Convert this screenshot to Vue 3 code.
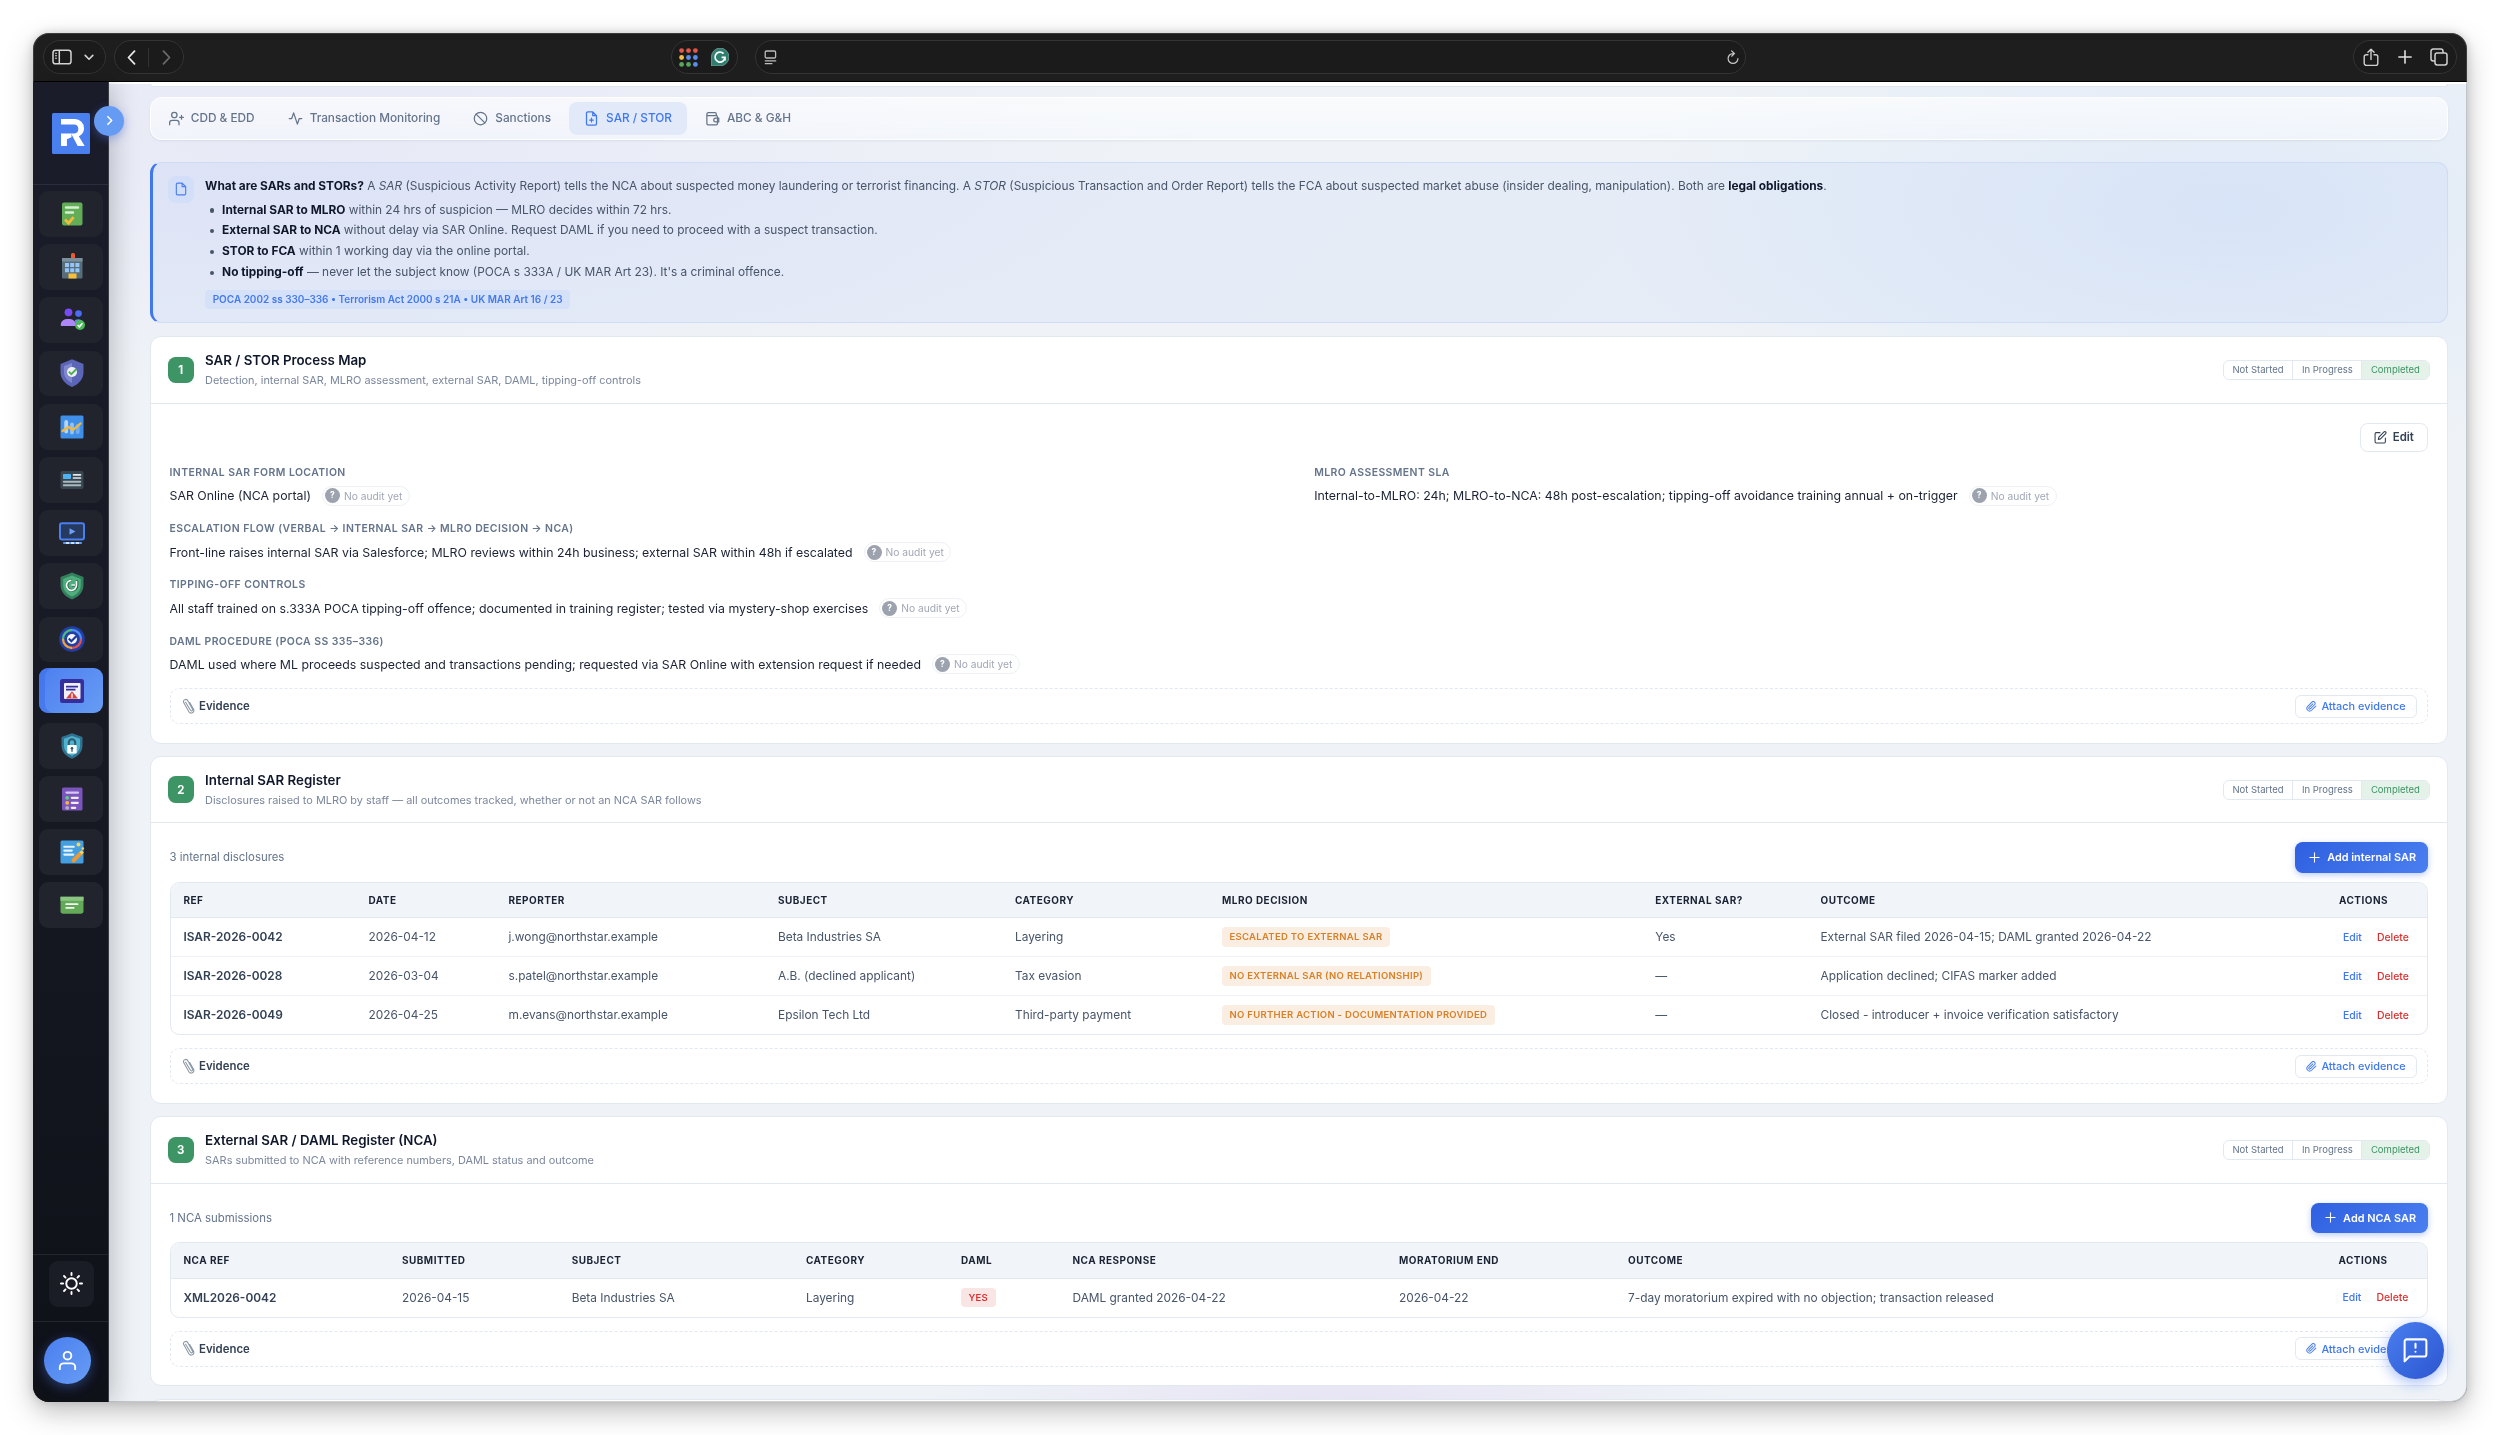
<script setup>
const tabs = [
  { label: 'CDD & EDD', icon: 'user' },
  { label: 'Transaction Monitoring', icon: 'pulse' },
  { label: 'Sanctions', icon: 'ban' },
  { label: 'SAR / STOR', icon: 'file', active: true },
  { label: 'ABC & G&H', icon: 'wallet' },
]

const nav = ['check', 'building', 'people', 'shield', 'chart', 'news', 'video', 'green', 'target', 'report', 'lock', 'list', 'write', 'card']

const rules = [
  ['Internal SAR to MLRO', ' within 24 hrs of suspicion — MLRO decides within 72 hrs.'],
  ['External SAR to NCA', ' without delay via SAR Online. Request DAML if you need to proceed with a suspect transaction.'],
  ['STOR to FCA', ' within 1 working day via the online portal.'],
  ['No tipping-off', " — never let the subject know (POCA s 333A / UK MAR Art 23). It's a criminal offence."],
]

const fields = [
  { label: 'INTERNAL SAR FORM LOCATION', value: 'SAR Online (NCA portal)' },
  { label: 'MLRO ASSESSMENT SLA', value: 'Internal-to-MLRO: 24h; MLRO-to-NCA: 48h post-escalation; tipping-off avoidance training annual + on-trigger' },
  { label: 'ESCALATION FLOW (VERBAL → INTERNAL SAR → MLRO DECISION → NCA)', value: 'Front-line raises internal SAR via Salesforce; MLRO reviews within 24h business; external SAR within 48h if escalated', wide: true },
  { label: 'TIPPING-OFF CONTROLS', value: 'All staff trained on s.333A POCA tipping-off offence; documented in training register; tested via mystery-shop exercises', wide: true },
  { label: 'DAML PROCEDURE (POCA SS 335–336)', value: 'DAML used where ML proceeds suspected and transactions pending; requested via SAR Online with extension request if needed', wide: true },
]

const sections = [
  { n: 1, title: 'SAR / STOR Process Map', sub: 'Detection, internal SAR, MLRO assessment, external SAR, DAML, tipping-off controls' },
  {
    n: 2, title: 'Internal SAR Register', sub: 'Disclosures raised to MLRO by staff — all outcomes tracked, whether or not an NCA SAR follows',
    count: '3 internal disclosures', add: 'Add internal SAR', cols: 'cols-internal',
    head: ['REF', 'DATE', 'REPORTER', 'SUBJECT', 'CATEGORY', 'MLRO DECISION', 'EXTERNAL SAR?', 'OUTCOME'],
    rows: [
      ['ISAR-2026-0042', '2026-04-12', 'j.wong@northstar.example', 'Beta Industries SA', 'Layering', { pill: 'ESCALATED TO EXTERNAL SAR', tone: 'amber' }, 'Yes', 'External SAR filed 2026-04-15; DAML granted 2026-04-22'],
      ['ISAR-2026-0028', '2026-03-04', 's.patel@northstar.example', 'A.B. (declined applicant)', 'Tax evasion', { pill: 'NO EXTERNAL SAR (NO RELATIONSHIP)', tone: 'amber' }, '—', 'Application declined; CIFAS marker added'],
      ['ISAR-2026-0049', '2026-04-25', 'm.evans@northstar.example', 'Epsilon Tech Ltd', 'Third-party payment', { pill: 'NO FURTHER ACTION - DOCUMENTATION PROVIDED', tone: 'amber' }, '—', 'Closed - introducer + invoice verification satisfactory'],
    ],
  },
  {
    n: 3, title: 'External SAR / DAML Register (NCA)', sub: 'SARs submitted to NCA with reference numbers, DAML status and outcome',
    count: '1 NCA submissions', add: 'Add NCA SAR', cols: 'cols-external',
    head: ['NCA REF', 'SUBMITTED', 'SUBJECT', 'CATEGORY', 'DAML', 'NCA RESPONSE', 'MORATORIUM END', 'OUTCOME'],
    rows: [
      ['XML2026-0042', '2026-04-15', 'Beta Industries SA', 'Layering', { pill: 'YES', tone: 'red' }, 'DAML granted 2026-04-22', '2026-04-22', '7-day moratorium expired with no objection; transaction released'],
    ],
  },
]
</script>

<template>
  <div class="window">
    <header class="chrome">
      <div class="pill p-side">
        <svg width="20" height="16" viewBox="0 0 20 16" fill="none" stroke="#d6d6d6" stroke-width="1.5"><rect x="1" y="1.2" width="18" height="13.6" rx="2.6" /><path d="M7.3 1.2v13.6" /><path d="M3 4.3h2M3 6.8h2M3 9.3h2" stroke-width="1.1" /></svg>
        <svg width="10" height="7" viewBox="0 0 10 7" fill="none" stroke="#d6d6d6" stroke-width="1.6" stroke-linecap="round" stroke-linejoin="round"><path d="M1.2 1.4 5 5.2l3.8-3.8" /></svg>
      </div>
      <div class="pill p-nav">
        <svg width="9" height="15" viewBox="0 0 9 15" fill="none" stroke="#e8e8e8" stroke-width="1.8" stroke-linecap="round" stroke-linejoin="round"><path d="M7.5 1.2 1.5 7.5l6 6.3" /></svg>
        <i class="vline"></i>
        <svg width="9" height="15" viewBox="0 0 9 15" fill="none" stroke="#6a6a6a" stroke-width="1.8" stroke-linecap="round" stroke-linejoin="round"><path d="m1.5 1.2 6 6.3-6 6.3" /></svg>
      </div>
      <div class="pill p-ext">
        <svg width="19" height="19" viewBox="0 0 19 19">
          <g fill="#e2574a"><circle cx="2.6" cy="2.6" r="2.4" /><circle cx="9.5" cy="2.6" r="2.4" /><circle cx="16.4" cy="2.6" r="2.4" /></g>
          <circle cx="2.6" cy="9.5" r="2.4" fill="#f2bd42" /><g fill="#5b8def"><circle cx="9.5" cy="9.5" r="2.4" /><circle cx="16.4" cy="9.5" r="2.4" /><circle cx="16.4" cy="16.4" r="2.4" /></g>
          <g fill="#58a55c"><circle cx="2.6" cy="16.4" r="2.4" /><circle cx="9.5" cy="16.4" r="2.4" /></g>
        </svg>
        <svg width="18" height="18" viewBox="0 0 18 18"><path d="M9 0a9 9 0 1 1 0 18H.4V9A9 9 0 0 1 9 0z" fill="#2f7f71" stroke="#9fb5b0" stroke-width=".6" /><path d="M12.6 5.6A5 5 0 1 0 14 9.4h-3.4M14 9.200v3.200" fill="none" stroke="#fff" stroke-width="1.7" /></svg>
      </div>
      <div class="pill p-url">
        <svg width="13" height="15" viewBox="0 0 13 15" fill="none" stroke="#bdbdbd" stroke-width="1.3"><rect x="1.2" y="1" width="10.4" height="7" rx="1.3" /><path d="M.8 10.800h11.400M.8 13.700h7.600" /></svg>
        <svg width="12" height="15" viewBox="0 0 12 15" fill="none" stroke="#c8c8c8" stroke-width="1.2" stroke-linecap="round"><path d="M6 3.600a4.900 4.900 0 1 0 4.900 4.900M4.600.9 7.400 3.600 4.700 6.200" /></svg>
      </div>
      <div class="pill p-act">
        <svg width="16" height="19" viewBox="0 0 16 19" fill="none" stroke="#d0d0d0" stroke-width="1.4" stroke-linecap="round" stroke-linejoin="round"><path d="M5 6.700H3.200A2 2 0 0 0 1.200 8.700v6.500a2.200 2.200 0 0 0 2.200 2.200h9.200a2.200 2.200 0 0 0 2.200-2.200V8.700a2 2 0 0 0-2-2H11M8 11.500V1.400M4.900 4.300 8 1.200l3.100 3.100" /></svg>
        <svg width="14" height="14" viewBox="0 0 14 14" stroke="#e0e0e0" stroke-width="1.6" stroke-linecap="round"><path d="M7 .9v12.200M.9 7h12.200" /></svg>
        <svg width="18" height="18" viewBox="0 0 18 18" fill="none" stroke="#d0d0d0" stroke-width="1.5" stroke-linejoin="round"><rect x="5" y="5" width="12" height="12" rx="2.2" /><path d="M5 13H3.200A2.200 2.200 0 0 1 1 10.800V3.200A2.200 2.200 0 0 1 3.200 1h7.600A2.200 2.200 0 0 1 13 3.200V5" /></svg>
      </div>
    </header>

    <div class="body">
      <aside class="sidebar">
        <div class="brand">
          <svg width="38" height="41" viewBox="0 0 38 41"><rect width="38" height="41" rx="1.5" fill="#4a7ff0" /><path d="M9 6h14a9 9 0 0 1 9 9.300c0 4-2.300 6.700-5.200 7.900L32.700 33h-7l-6.600-12.600h3.400c2.500 0 3.800-1.700 3.800-4.300 0-2.900-1.500-4.500-4-4.500H9z" fill="#fff" /><path d="M9 20.400h10.500v3.900l-4.600 2V33H9z" fill="#fff" /></svg>
        </div>
        <nav class="nav">
          <div v-for="icon in nav" :key="icon" class="tile" :class="{ active: icon === 'report' }">
            <svg width="28" height="28" viewBox="0 0 28 28">
              <template v-if="icon === 'check'">
                <rect x="4" y="2.5" width="20.5" height="23" rx="2" fill="#63ad58" /><path d="M8 7.500h12M8 12.500h7" stroke="#d5efd0" stroke-width="2.4" stroke-linecap="round" /><path d="m7 19.500 3.600 3.700 5-6" fill="none" stroke="#f6b93b" stroke-width="2.8" />
              </template>
              <template v-else-if="icon === 'building'">
                <rect x="13" y="0" width="4" height="6" rx="1.5" fill="#ee5a30" /><rect x="4" y="5" width="20.5" height="20.5" rx="1" fill="#586d78" /><path d="M4 5h20.500v3.500H4z" fill="#7b909b" /><path d="M7 10h4v4H7zM12.200 10h4v4h-4zM17.400 10h4v4h-4zM7 15.200h4v4H7zM12.200 15.200h4v4h-4zM17.400 15.200h4v4h-4z" fill="#94c6f7" /><path d="M10.500 20.500h8v5h-8z" fill="#f6be3b" />
              </template>
              <template v-else-if="icon === 'people'">
                <circle cx="10.5" cy="6.3" r="3.9" fill="#774bf2" /><circle cx="20.5" cy="7.6" r="3.3" fill="#4c6bf5" /><path d="M17 14c4-2 8 0 8.500 4l-8 2z" fill="#5f8df7" /><path d="M2.800 20v-1.500c0-3.500 3-5.500 7.500-5.500s7.500 2 7.500 5.500V20z" fill="#ad87f8" /><circle cx="22" cy="19" r="5" fill="#4dbb5b" /><path d="m19.700 19 1.700 1.800 3-3.500" fill="none" stroke="#fff" stroke-width="1.6" />
              </template>
              <template v-else-if="icon === 'shield'">
                <path d="M14 .3 25.500 5v8c0 7.200-4.500 12-11.500 15C7 25 2.500 20.200 2.500 13V5z" fill="#5b66b8" /><path d="M14 4v20c-5-2.600-8-6.200-8-11V7z" fill="#8089cb" /><circle cx="14" cy="13" r="5" fill="#eef1fb" /><path d="m10.800 12.600 2.500 2.600 5.200-5.200" fill="none" stroke="#4eae50" stroke-width="1.9" />
              </template>
              <template v-else-if="icon === 'chart'">
                <rect x="2.5" y="2.5" width="23" height="23" rx="1.5" fill="#3f8fe8" /><path d="M8.200 9v9.500" stroke="#b5d4f8" stroke-width="3.8" stroke-linecap="round" /><path d="M14 11.500v8" stroke="#93c1f5" stroke-width="3.8" stroke-linecap="round" /><path d="M19.700 13v6" stroke="#71adf0" stroke-width="3.8" stroke-linecap="round" /><path d="m4.500 18 6-4 4.500 3 7.500-6.500" fill="none" stroke="#f6b93b" stroke-width="2.3" stroke-linecap="round" stroke-linejoin="round" />
              </template>
              <template v-else-if="icon === 'news'">
                <rect x="2.5" y="5" width="23" height="18" rx="1.8" fill="#38474f" /><rect x="5" y="8" width="8" height="5" rx=".8" fill="#4fb2f2" /><path d="M15.500 8.800h7M15.500 12h7" stroke="#e3e9ec" stroke-width="1.7" stroke-linecap="round" /><path d="M5.800 15.800h16.500M5.800 19.200h16.500" stroke="#aab9c0" stroke-width="1.9" stroke-linecap="round" />
              </template>
              <template v-else-if="icon === 'video'">
                <rect x="2" y="4.2" width="24" height="16.3" rx="2" fill="#253a5e" stroke="#4a7ff0" stroke-width="2" /><path d="m11.500 9.200 6 3.300-6 3.300z" fill="#6d9df5" /><path d="M6 24h17" stroke="#5b9bf5" stroke-width="2.2" stroke-linecap="round" /><path d="M8 24h13" stroke="#cfe0fc" stroke-width="1.8" stroke-dasharray="3 2" />
              </template>
              <template v-else-if="icon === 'green'">
                <path d="M14 .6 25.500 5v8c0 7-4.500 11.500-11.500 14.400C7 24.500 2.500 20 2.500 13V5z" fill="#347f5d" /><path d="M14 3.500 22.800 7v6.300c0 5.200-3.300 8.700-8.800 11.200-5.500-2.500-8.800-6-8.800-11.200V7z" fill="#4fae7d" /><path d="M14 8.300a5 5 0 1 0 5 5V8.500M14 13.300h3.200" fill="none" stroke="#1f5a41" stroke-width="2.6" /><path d="M13.500 8.300a5 5 0 1 0 5 5V9M13.500 13h3.500" fill="none" stroke="#fff" stroke-width="1.7" />
              </template>
              <template v-else-if="icon === 'target'">
                <circle cx="14" cy="14" r="12.8" fill="#233ea5" /><g fill="none" stroke-width="2.3"><path d="M14 5a9 9 0 0 1 9 9" stroke="#4b8df2" /><path d="M23 14a9 9 0 0 1-9 9" stroke="#e2544c" /><path d="M14 23a9 9 0 0 1-9-9" stroke="#f0a437" /><path d="M5 14a9 9 0 0 1 9-9" stroke="#4cb781" /></g><circle cx="14" cy="14" r="5" fill="#f3f6ff" /><path d="m10.800 13.600 2.500 2.600 5.200-5.200" fill="none" stroke="#1f3a9b" stroke-width="2.2" />
              </template>
              <template v-else-if="icon === 'report'">
                <rect x="2" y="2" width="24" height="24" rx="2.5" fill="#352f9c" /><rect x="6" y="6" width="16.5" height="16" rx="1" fill="#f1effc" /><path d="M8 9.600h12M8 12.600h9.500" stroke="#352f9c" stroke-width="1.7" /><path d="m14 14.200 6 7.300H8z" fill="#d8423b" /><path d="M14 16.500v4.300" stroke="#fff" stroke-width="1.4" />
              </template>
              <template v-else-if="icon === 'lock'">
                <path d="M14 1.300 24.500 5v8.500c0 6.500-4 10.500-10.500 13.300-6.500-2.800-10.500-6.800-10.500-13.300V5z" fill="#31728f" /><path d="M14 4 22 6.800v6.700c0 5-3 8-8 10.500-5-2.500-8-5.500-8-10.500V6.800z" fill="#4db1d0" /><path d="M10.800 13.500v-3a3.200 3.200 0 0 1 6.400 0v3" fill="none" stroke="#33586c" stroke-width="2" /><rect x="9.300" y="13" width="9.4" height="8.5" rx=".8" fill="#fff" /><circle cx="14" cy="16.2" r="1.3" fill="#33586c" /><path d="M14 16.500v3.300" stroke="#33586c" stroke-width="1.3" />
              </template>
              <template v-else-if="icon === 'list'">
                <rect x="4" y="2.5" width="20.5" height="23" rx="1.5" fill="#7a55bb" /><path d="M8.500 7.600h11.500" stroke="#d5c7ef" stroke-width="2.3" stroke-linecap="round" /><path d="M13.800 12.800h6M13.800 17.800h6M13.800 22.800h3.400" stroke="#f1ebfb" stroke-width="2.2" stroke-linecap="round" /><circle cx="9.2" cy="12.8" r="1.9" fill="#5fd07c" /><circle cx="9.2" cy="17.8" r="1.9" fill="#f6b93b" /><circle cx="9.2" cy="22.8" r="1.9" fill="#b3b0c2" />
              </template>
              <template v-else-if="icon === 'write'">
                <rect x="2.5" y="2.5" width="23" height="23" rx="1.5" fill="#439fe0" /><path d="M6.300 8.800h9.500M6.300 12.600h7.500M6.300 16.600h9" stroke="#e3f2fd" stroke-width="2.1" stroke-linecap="round" /><path d="m15.500 22.500 7.500-7.500" stroke="#eb9a35" stroke-width="4" stroke-linecap="round" /><path d="m22.500 13.200 2.300 2.300" stroke="#f9d45c" stroke-width="3" /><circle cx="20.5" cy="6.5" r="2" fill="#f9d45c" /><circle cx="24.8" cy="10.5" r="1.3" fill="#f9d45c" />
              </template>
              <template v-else>
                <path d="M2.500 5.800h23V20a2.700 2.700 0 0 1-2.700 2.700H5.200A2.700 2.700 0 0 1 2.500 20z" fill="#62aa57" /><path d="M2.500 5.800h23v4h-23z" fill="#8cc583" /><path d="M8.200 13.200h11.300M8.200 16.800h7.500" stroke="#f3faf2" stroke-width="1.8" stroke-linecap="round" />
              </template>
            </svg>
          </div>
        </nav>
        <div class="theme">
          <div class="theme-tile">
            <svg width="23" height="23" viewBox="0 0 24 24" fill="none" stroke="#fff" stroke-width="2" stroke-linecap="round"><circle cx="12" cy="12" r="5.5" /><path d="M12 1v2.200M12 20.800V23M1 12h2.200M20.800 12H23M4.200 4.200l1.600 1.600M18.200 18.200l1.600 1.600M4.200 19.800l1.600-1.600M18.200 5.800l1.600-1.600" /></svg>
          </div>
        </div>
        <div class="account">
          <div class="avatar">
            <svg width="23" height="23" viewBox="0 0 24 24" fill="none" stroke="#fff" stroke-width="2" stroke-linecap="round" stroke-linejoin="round"><path d="M20 21v-2a4 4 0 0 0-4-4H8a4 4 0 0 0-4 4v2" /><circle cx="12" cy="7" r="4" /></svg>
          </div>
        </div>
        <div class="toggle">
          <svg width="13" height="13" viewBox="0 0 24 24" fill="none" stroke="#fff" stroke-width="3" stroke-linecap="round" stroke-linejoin="round"><path d="m9 5 7 7-7 7" /></svg>
        </div>
      </aside>

      <main class="content">
        <div class="prev-card"></div>

        <div class="tabs">
          <div v-for="t in tabs" :key="t.label" class="tab" :class="{ active: t.active }">
            <svg width="15" height="15" viewBox="0 0 24 24" fill="none" stroke="currentColor" stroke-width="2" stroke-linecap="round" stroke-linejoin="round">
              <template v-if="t.icon === 'user'"><path d="M16 22v-3a4 4 0 0 0-4-4H5a4 4 0 0 0-4 4v3M20 7v6M23 10h-6" /><circle cx="8.5" cy="6.5" r="4.3" /></template>
              <path v-else-if="t.icon === 'pulse'" d="M22 12h-4l-3 9L9 3l-3 9H2" />
              <template v-else-if="t.icon === 'ban'"><circle cx="12" cy="12" r="10" /><path d="m4.930 4.930 14.140 14.140" /></template>
              <template v-else-if="t.icon === 'file'"><path d="M14 1.500H6a2 2 0 0 0-2 2v17a2 2 0 0 0 2 2h12a2 2 0 0 0 2-2V7.500zM14 1.500v6h6M12 11.500v6M9 14.500h6" /></template>
              <template v-else><path d="M18 7V4.500a2 2 0 0 0-2-2H5.500a2.500 2.500 0 0 0 0 5H18a2 2 0 0 1 2 2V20a2 2 0 0 1-2 2H5a2 2 0 0 1-2-2V5" /><path d="M22 11.500h-5a3 3 0 0 0 0 6h5z" /></template>
            </svg>
            <span>{{ t.label }}</span>
          </div>
        </div>

        <section class="info">
          <div class="info-icon">
            <svg width="14" height="14" viewBox="0 0 24 24" fill="none" stroke="#4a7ff0" stroke-width="2" stroke-linecap="round" stroke-linejoin="round"><path d="M14 2H6a2 2 0 0 0-2 2v16a2 2 0 0 0 2 2h12a2 2 0 0 0 2-2V8zM14 2v6h6" /></svg>
          </div>
          <div class="info-text">
            <p><b>What are SARs and STORs?</b> A <em>SAR</em> (Suspicious Activity Report) tells the NCA about suspected money laundering or terrorist financing. A <em>STOR</em> (Suspicious Transaction and Order Report) tells the FCA about suspected market abuse (insider dealing, manipulation). Both are <b>legal obligations</b>.</p>
            <ul>
              <li v-for="r in rules" :key="r[0]"><b>{{ r[0] }}</b>{{ r[1] }}</li>
            </ul>
            <span class="legal">POCA 2002 ss 330–336 • Terrorism Act 2000 s 21A • UK MAR Art 16 / 23</span>
          </div>
        </section>

        <section v-for="s in sections" :key="s.n" class="card">
          <div class="card-head">
            <div class="num">{{ s.n }}</div>
            <div class="heading">
              <h2>{{ s.title }}</h2>
              <p>{{ s.sub }}</p>
            </div>
            <div class="segments">
              <span>Not Started</span><span>In Progress</span><span class="on">Completed</span>
            </div>
          </div>
          <div class="card-body">
            <template v-if="!s.rows">
              <div class="edit-row">
                <button class="edit">
                  <svg width="13" height="13" viewBox="0 0 24 24" fill="none" stroke="currentColor" stroke-width="2" stroke-linecap="round" stroke-linejoin="round"><path d="M11 3H4a2 2 0 0 0-2 2v15a2 2 0 0 0 2 2h15a2 2 0 0 0 2-2v-7" /><path d="M18.500 1.800a2.100 2.100 0 0 1 3 3L12 14.500l-4 1 1-4z" /></svg>
                  Edit
                </button>
              </div>
              <div class="fields">
                <div v-for="f in fields" :key="f.label" class="field" :class="{ wide: f.wide }">
                  <label>{{ f.label }}</label>
                  <div class="value">{{ f.value }}<span class="audit"><i>?</i>No audit yet</span></div>
                </div>
              </div>
            </template>
            <template v-else>
              <div class="toolbar">
                <span class="count">{{ s.count }}</span>
                <button class="add">
                  <svg width="13" height="13" viewBox="0 0 24 24" stroke="#fff" stroke-width="2" stroke-linecap="round"><path d="M12 3.500v17M3.500 12h17" /></svg>
                  {{ s.add }}
                </button>
              </div>
              <div class="table" :class="s.cols">
                <div class="tr th"><span v-for="h in s.head" :key="h">{{ h }}</span><span>ACTIONS</span></div>
                <div v-for="row in s.rows" :key="row[0]" class="tr">
                  <span v-for="(c, i) in row" :key="i"><span v-if="c.pill" class="tag" :class="c.tone">{{ c.pill }}</span><template v-else>{{ c }}</template></span>
                  <span class="links"><a class="e">Edit</a><a class="d">Delete</a></span>
                </div>
              </div>
            </template>
            <div class="evidence">
              <svg class="clip" width="14" height="17" viewBox="0 0 14 17" fill="none" stroke="#8d9aa8" stroke-width="1.1" stroke-linecap="round"><path d="M4.600 4.200 9.300 12c.9 1.600 2.900.5 2.100-1.100L6.700 2.600C5.300.3 1.500 1.700 2.700 4.600l5.200 9.200c1.700 2.700 6 .7 4.700-2.500L8.700 4.500" /></svg>
              <b>Evidence</b>
              <button class="attach">
                <svg width="11" height="11" viewBox="0 0 24 24" fill="none" stroke="#4a7ff0" stroke-width="2.2" stroke-linecap="round" stroke-linejoin="round"><path d="m21.400 11-9.200 9.200a6 6 0 0 1-8.500-8.500l9.200-9.200a4 4 0 0 1 5.700 5.700l-9.200 9.200a2 2 0 0 1-2.900-2.900l8.500-8.400" /></svg>
                Attach evidence
              </button>
            </div>
          </div>
        </section>
        <div class="next-card"></div>
      </main>
    </div>

    <div class="fab">
      <svg width="29" height="29" viewBox="0 0 24 24" fill="none" stroke="#fff" stroke-width="1.7" stroke-linejoin="round" stroke-linecap="round"><path d="M21 4.500v10.800a1.700 1.700 0 0 1-1.700 1.700H7l-4 4V4.500A1.700 1.700 0 0 1 4.700 2.800h14.600A1.700 1.700 0 0 1 21 4.500zM12 6.500v3.300M12 13v.1" /></svg>
    </div>
  </div>
</template>

<style>
body { margin: 0; background: #fff; }
#app { height: 1435px; display: flow-root; overflow: hidden; }
</style>

<style scoped>
* { box-sizing: border-box; }
p, h2, ul { margin: 0; padding: 0; }
button { font: inherit; margin: 0; padding: 0; background: none; border: 0; }
svg { display: block; flex: none; }
.window {
  position: relative; width: 2434px; height: 1369px; margin: 33px 0 33px 33px; border-radius: 16px;
  overflow: clip; font-family: Inter, "Liberation Sans", sans-serif; color: #1a2233;
  display: flex; flex-direction: column; background: #1e1e1e;
  filter: drop-shadow(0 10px 14px rgba(0, 0, 0, .22)) drop-shadow(0 0 5px rgba(0, 0, 0, .16));
}
.window::after { content: ""; position: absolute; inset: 0; border-radius: 16px; box-shadow: inset 0 0 0 1px rgba(120, 120, 120, .35); pointer-events: none; }

.chrome { height: 49px; flex: none; display: flex; align-items: center; padding: 0 10px 0 9.5px; border-bottom: 1px solid #000; }
.pill { height: 34px; border-radius: 17px; border: 1px solid #343434; background: #1b1b1b; display: flex; align-items: center; justify-content: space-between; }
.p-side { width: 63px; padding: 0 11px 0 8px; }
.p-nav { width: 70px; margin-left: 8px; padding: 0 12px; }
.vline { width: 1px; height: 19px; background: #333; }
.p-ext { width: 67px; margin-left: 487px; padding: 0 7.5px; }
.p-url { width: 991px; margin-left: 17px; padding: 0 6px 0 8px; }
.p-act { width: 104px; margin-left: auto; padding: 0 8px 0 9px; }

.body { flex: 1; min-height: 0; display: flex; }
.sidebar { position: relative; z-index: 2; width: 76px; flex: none; background: linear-gradient(180deg, #1a1c2a 0%, #171923 50%, #0f1119 100%); display: flex; flex-direction: column; box-shadow: 4px 0 24px rgba(0, 0, 0, .22); border-right: 1px solid #3a3c46; }
.brand { height: 103px; flex: none; border-bottom: 1px solid #2b2d3a; padding: 31px 0 0 19px; }
.nav { flex: 1; padding: 6px 0 0 6px; display: flex; flex-direction: column; gap: 7.4px; }
.tile { width: 63.6px; height: 45.8px; flex: none; border-radius: 9px; background: #21232d; display: flex; align-items: center; justify-content: center; padding-left: 2px; }
.tile.active { background: linear-gradient(135deg, #4d7ff0, #679cf4); transform: translateY(-2px); box-shadow: inset 6px 0 0 rgba(59, 110, 235, .55); }
.theme { height: 67px; flex: none; border-top: 1px solid #23252f; padding: 6px 0 0 15.5px; }
.theme-tile { width: 45.6px; height: 45.6px; border-radius: 9px; background: #1b1d26; display: flex; align-items: center; justify-content: center; }
.account { height: 81px; flex: none; border-top: 1px solid #23252f; padding: 15px 0 0 11px; }
.avatar { width: 46.6px; height: 46.6px; border-radius: 50%; background: linear-gradient(135deg, #4a7ff0, #679cf4); display: flex; align-items: center; justify-content: center; box-shadow: 0 3px 12px rgba(74, 127, 240, .4); }
.toggle { position: absolute; left: 61px; top: 23.5px; width: 30px; height: 30px; border-radius: 50%; background: #669bf3; display: flex; align-items: center; justify-content: center; box-shadow: 0 3px 10px rgba(80, 110, 220, .45); }

.content {
  flex: 1; min-width: 0; padding: 0 19.5px 0 40.5px; border-top: 2px solid #fff; overflow: hidden;
  background:
    radial-gradient(ellipse 620px 260px at 90% 9.5%, rgba(208, 224, 248, .5), rgba(208, 224, 248, 0) 100%),
    radial-gradient(ellipse 900px 260px at 8% 4%, rgba(226, 226, 246, .6), rgba(226, 226, 246, 0) 100%),
    radial-gradient(ellipse 420px 90px at 52% 100%, rgba(230, 226, 244, .9), rgba(230, 226, 244, 0) 100%),
    #eff3f7;
}
.prev-card { height: 3px; background: #fff; border: 1px solid #dfe5ee; border-top: 0; border-radius: 0 0 9px 9px; }
.tabs { margin-top: 10px; height: 43px; border-radius: 12px; border: 1px solid rgba(255, 255, 255, .9); background: linear-gradient(180deg, rgba(255, 255, 255, .65), rgba(248, 251, 255, .55)); box-shadow: 0 1px 2px rgba(100, 116, 150, .12); display: flex; align-items: center; gap: 3px; padding: 0 3.3px; }
.tab { height: 33.3px; border-radius: 8px; padding: 0 15px; display: flex; align-items: center; gap: 7px; font-size: 11.8px; font-weight: 500; color: #64748b; white-space: nowrap; }
.tab.active { color: #3f78f0; background: #e2e9f9; }

.info { margin-top: 22px; height: 161px; border: 1px solid #cfdcf6; border-left: 3px solid #3f78ee; border-radius: 11px; background: linear-gradient(135deg, rgba(74, 127, 240, .07), rgba(74, 127, 240, .05)); display: flex; gap: 11px; padding: 13px 15px 0 15px; }
.info-icon { width: 26.6px; height: 26.6px; flex: none; border-radius: 7.6px; background: #d3dff8; display: flex; align-items: center; justify-content: center; }
.info-text { font-size: 11.875px; line-height: 20.9px; color: #475569; white-space: nowrap; }
.info-text p { line-height: 20px; }
.info-text b { color: #0f172a; font-weight: 700; }
.info-text ul { list-style: none; margin-top: 3.5px; padding-left: 17px; }
.info-text li { position: relative; }
.info-text li::before { content: ""; position: absolute; left: -12.5px; top: 8.5px; width: 4.5px; height: 4.5px; border-radius: 50%; background: #475569; }
.legal { display: block; width: max-content; margin-top: 6.5px; height: 19px; line-height: 19px; padding: 0 7.6px; border-radius: 4px; background: #d5e1f8; color: #4379ee; font-size: 9.975px; font-weight: 600; }

.card { margin-top: 12.4px; background: #fff; border: 1px solid #e2e8f0; border-radius: 11px; }
.info + .card { margin-top: 13.3px; }
.card-head { height: 66.3px; border-bottom: 1px solid #e2e8f0; display: flex; align-items: center; padding: 0 17px; }
.num { width: 26.6px; height: 26.6px; border-radius: 7.6px; background: #3d9465; color: #fff; font-size: 11.4px; font-weight: 700; display: flex; align-items: center; justify-content: center; }
.heading { margin-left: 11px; flex: 1; padding-top: 1px; }
.heading h2 { font-size: 13.3px; line-height: 18px; font-weight: 600; color: #0f172a; }
.heading p { margin-top: 2px; font-size: 10.925px; line-height: 18px; color: #7b879c; }
.segments { display: flex; height: 20px; border: 1px solid #e2e8f0; border-radius: 6px; overflow: hidden; font-size: 9.5px; color: #64748b; line-height: 18px; }
.segments span { padding: 0 8.6px; }
.segments span + span { border-left: 1px solid #e2e8f0; }
.segments .on { background: #e5f2ea; color: #3d9465; }
.card-body { padding: 19px 18.5px 18.5px 19px; }
.edit-row { display: flex; justify-content: flex-end; }
.edit { height: 29px; width: 68px; border: 1px solid #e2e8f0; border-radius: 7.6px; display: flex; align-items: center; justify-content: center; gap: 5.5px; font-size: 11.4px; font-weight: 600; color: #334155; }
.fields { margin-top: 13.5px; display: grid; grid-template-columns: 1fr 1fr; column-gap: 31px; row-gap: 13.2px; margin-bottom: 11.4px; }
.field { height: 43px; white-space: nowrap; }
.field.wide { grid-column: 1 / -1; }
.field label { display: block; font-size: 10.45px; line-height: 16px; font-weight: 600; letter-spacing: .42px; color: #64748b; }
.value { margin-top: 4.8px; height: 20px; display: flex; align-items: center; font-size: 12.35px; color: #1a2233; }
.audit { margin-left: 11px; height: 20px; border: 1px solid #edf0f4; border-radius: 10px; padding: 0 6.5px 0 2px; display: flex; align-items: center; gap: 4px; font-size: 10.25px; color: #a0a8b5; }
.audit i { width: 15px; height: 15px; border-radius: 50%; background: #9ca3af; color: #fff; font-style: normal; font-weight: 700; font-size: 8.5px; line-height: 15px; text-align: center; }
.toolbar { display: flex; align-items: center; justify-content: space-between; height: 30.5px; }
.count { font-size: 11.4px; color: #64748b; }
.add { height: 30.5px; padding: 0 12px 0 12.5px; border-radius: 7.6px; background: linear-gradient(135deg, #2f5fe0, #4a7ff0); color: #fff; font-size: 10.925px; font-weight: 600; display: flex; align-items: center; gap: 6.5px; box-shadow: 0 2px 6px rgba(60, 110, 235, .35); }
.table { margin-top: 9px; border: 1px solid #e2e8f0; border-radius: 9.5px; overflow: hidden; margin-bottom: 13.2px; }
.tr { display: grid; height: 39px; align-items: center; padding-left: 13px; border-top: 1px solid #eef1f5; font-size: 11.875px; color: #475569; white-space: nowrap; }
.tr > span:first-child { font-weight: 600; color: #334155; }
.tr.th { height: 34.5px; border-top: 0; background: #f1f5f9; font-size: 9.975px; font-weight: 700; letter-spacing: .48px; color: #1a2233; }
.tr.th > span:first-child { font-weight: 700; color: #1a2233; }
.tr.th + .tr { border-top-color: #e2e8f0; }
.cols-internal .tr { grid-template-columns: 185px 140px 269.5px 237px 207px 433.3px 165.2px 518.5px 1fr; }
.cols-external .tr { grid-template-columns: 218.5px 169.7px 234.3px 155px 111.5px 326.5px 229px 710.5px 1fr; }
.tag { display: inline-block; height: 19.5px; line-height: 19.5px; border-radius: 4px; padding: 0 7.5px; font-size: 9.5px; font-weight: 600; letter-spacing: .3px; vertical-align: middle; }
.amber { background: #faeee3; color: #d97f25; }
.red { background: #fae5e5; color: #dc3030; }
.links { display: flex; gap: 15px; padding-left: 4px; font-size: 10.45px; font-weight: 500; }
.e { color: #3f78f0; }
.d { color: #dc3030; }
.evidence { height: 36px; border: 1px dashed #e2e8f0; border-radius: 9.5px; display: flex; align-items: center; padding: 0 10px; font-size: 11.4px; color: #334155; }
.evidence b { font-weight: 600; margin-left: 4.5px; flex: 1; }
.attach { height: 23px; width: 122px; border: 1px solid #e2e8f0; border-radius: 5.7px; background: #fff; display: flex; align-items: center; justify-content: center; gap: 4px; font-size: 10.925px; font-weight: 500; color: #3f78f0; }
.next-card { margin-top: 12.3px; height: 30px; background: #fff; border: 1px solid #e2e8f0; border-radius: 11px; }
.fab { position: absolute; left: 2354px; top: 1289px; width: 57px; height: 57px; border-radius: 50%; background: linear-gradient(135deg, #4a7ff0, #2b55cf); display: flex; align-items: center; justify-content: center; box-shadow: 0 4px 14px rgba(60, 110, 235, .45); }
</style>
